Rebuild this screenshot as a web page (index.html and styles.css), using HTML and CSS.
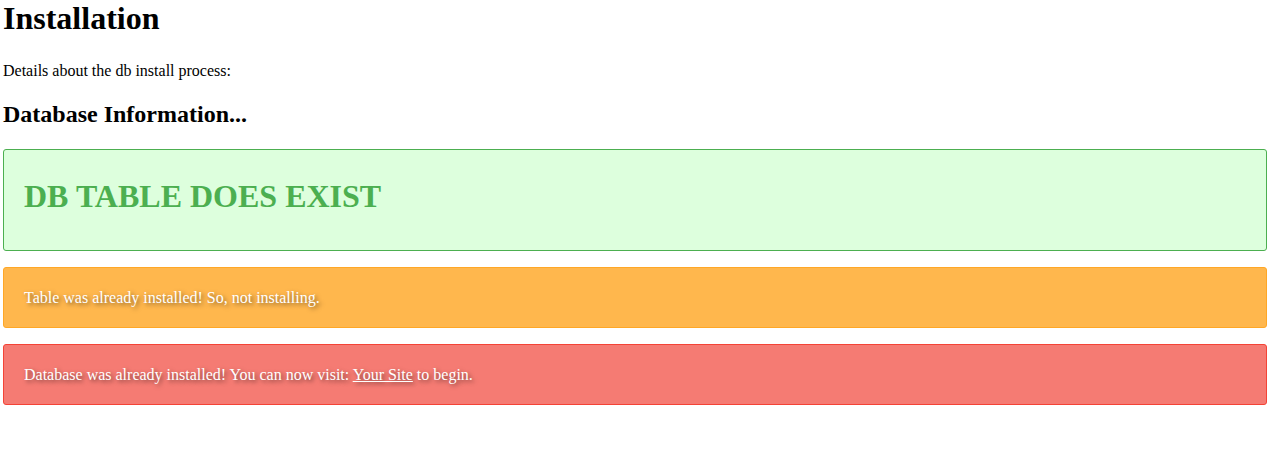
FILE: index.html
```html
<!DOCTYPE html>
<html>
<head>
<meta charset="utf-8">
<link rel="stylesheet" href="styles.css">
</head>
<body>
<h1 class="title">Installation</h1>
<p class="intro">Details about the db install process:</p>
<h2 class="sub">Database Information...</h2>
<div class="panel panel-green">
  <h1 class="panel-title">DB TABLE DOES EXIST</h1>
</div>
<div class="panel panel-orange">
  <p class="panel-text">Table was already installed! So, not installing.</p>
</div>
<div class="panel panel-red">
  <p class="panel-text">Database was already installed! You can now visit: <a href="#" class="link">Your Site</a> to begin.</p>
</div>
</body>
</html>
```

FILE: styles.css
```css
html, body {
  margin: 0;
  padding: 0;
}
body {
  font-family: "Liberation Serif", "Times New Roman", serif;
  font-size: 16px;
  color: #000;
  background: #fff;
  padding: 0 3px;
}
.title {
  font-size: 32px;
  font-weight: bold;
  margin: 0 0 25px 0;
  line-height: 37px;
}
.intro {
  margin: 16px 0;
  line-height: 18px;
}
.sub {
  font-size: 24px;
  line-height: 28px;
  margin: 20px 0 21px 0;
}
.panel {
  border: 1px solid;
  border-radius: 3px;
  padding: 0 20px;
  margin-bottom: 16px;
}
.panel-green {
  background: #ddffdd;
  border-color: #4caf50;
}
.panel-title {
  color: #4caf50;
  font-size: 32px;
  line-height: 40px;
  margin: 26px 0 34px 0;
}
.panel-orange {
  background: #ffb74d;
  border-color: #ffa726;
}
.panel-red {
  background: #f57b73;
  border-color: #f44336;
}
.panel-text {
  color: #fff;
  text-shadow: 2px 2px 4px rgba(0,0,0,0.5);
  line-height: 19px;
  margin: 20px 0;
}
.link {
  color: #fff;
}
```
